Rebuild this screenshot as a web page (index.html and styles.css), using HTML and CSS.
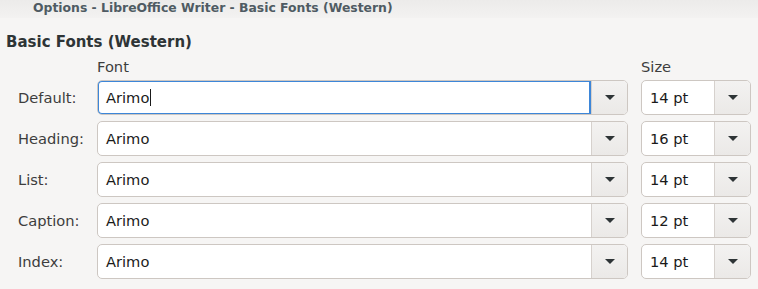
FILE: index.html
```html
<!DOCTYPE html>
<html lang="en">
<head>
    <meta charset="UTF-8">
    <title>Basic Fonts (Western)</title>
    <link rel="stylesheet" href="styles.css">
</head>
<body>
    <div class="titlebar">Options - LibreOffice Writer - Basic Fonts (Western)</div>
    <h1 class="section">Basic Fonts (Western)</h1>
    <div class="fonts-grid">
        <div></div>
        <div class="col-head">Font</div>
        <div class="col-head">Size</div>

        <label class="row-label">Default:</label>
        <div class="combo focused">
            <div class="entry">Arimo<span class="caret"></span></div>
            <div class="drop"><span class="arrow"></span></div>
        </div>
        <div class="combo">
            <div class="entry">14 pt</div>
            <div class="drop"><span class="arrow"></span></div>
        </div>

        <label class="row-label">Heading:</label>
        <div class="combo">
            <div class="entry">Arimo</div>
            <div class="drop"><span class="arrow"></span></div>
        </div>
        <div class="combo">
            <div class="entry">16 pt</div>
            <div class="drop"><span class="arrow"></span></div>
        </div>

        <label class="row-label">List:</label>
        <div class="combo">
            <div class="entry">Arimo</div>
            <div class="drop"><span class="arrow"></span></div>
        </div>
        <div class="combo">
            <div class="entry">14 pt</div>
            <div class="drop"><span class="arrow"></span></div>
        </div>

        <label class="row-label">Caption:</label>
        <div class="combo">
            <div class="entry">Arimo</div>
            <div class="drop"><span class="arrow"></span></div>
        </div>
        <div class="combo">
            <div class="entry">12 pt</div>
            <div class="drop"><span class="arrow"></span></div>
        </div>

        <label class="row-label">Index:</label>
        <div class="combo">
            <div class="entry">Arimo</div>
            <div class="drop"><span class="arrow"></span></div>
        </div>
        <div class="combo">
            <div class="entry">14 pt</div>
            <div class="drop"><span class="arrow"></span></div>
        </div>
    </div>
</body>
</html>
```

FILE: styles.css
```css
body {
    margin: 0;
    background-color: #f6f5f4;
    font-family: "DejaVu Sans", sans-serif;
    font-size: 14.67px;
    color: #2e3436;
}
.titlebar {
    height: 18px;
    line-height: 16px;
    padding-left: 33px;
    font-size: 12.4px;
    font-weight: bold;
    color: #4f5b63;
    background: linear-gradient(#ecebea, #f3f2f1);
}
.section {
    margin: 14px 0 0 6px;
    font-size: 15px;
    font-weight: bold;
    line-height: 20px;
    color: #2e3436;
}
.fonts-grid {
    display: grid;
    grid-template-columns: 84px 531px 110px;
    column-gap: 13px;
    row-gap: 6px;
    margin-top: 6px;
}
.col-head {
    line-height: 18px;
    color: #3d3d3d;
    margin-bottom: -2px;
}
.row-label {
    padding-left: 18px;
    align-self: center;
    color: #3d3d3d;
    white-space: nowrap;
}
.combo {
    display: flex;
    height: 35px;
    box-sizing: border-box;
    border: 1px solid #cdc7c2;
    border-radius: 5px;
    background-color: #ffffff;
    overflow: hidden;
}
.entry {
    flex: 1;
    display: flex;
    align-items: center;
    padding-left: 8px;
    color: #1a1a1a;
}
.drop {
    width: 35px;
    border-left: 1px solid #d6d1cd;
    background: linear-gradient(#f3f2f1, #ebe9e7);
    display: flex;
    align-items: center;
    justify-content: center;
}
.arrow {
    width: 0;
    height: 0;
    border-left: 5px solid transparent;
    border-right: 5px solid transparent;
    border-top: 5px solid #2e3436;
}
.focused .entry {
    border: 2px solid #3d86d8;
    border-radius: 5px 0 0 5px;
    margin: -1px 0 -1px -1px;
    padding-left: 7px;
}
.caret {
    display: inline-block;
    width: 1px;
    height: 17px;
    background-color: #1a1a1a;
    margin-left: 1px;
}
```
